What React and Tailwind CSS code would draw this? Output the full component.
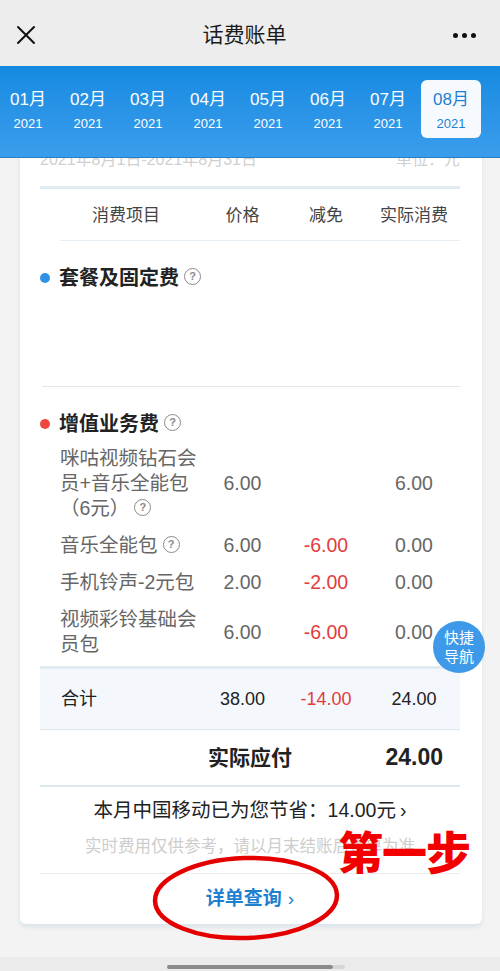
import React from "react";

const MONTHS = ["01", "02", "03", "04", "05", "06", "07", "08"];

const ITEMS = [
  { name: "咪咕视频钻石会员+音乐全能包（6元）", tip: true, price: "6.00", cut: "", actual: "6.00" },
  { name: "音乐全能包", tip: true, price: "6.00", cut: "-6.00", actual: "0.00" },
  { name: "手机铃声-2元包", tip: false, price: "2.00", cut: "-2.00", actual: "0.00" },
  { name: "视频彩铃基础会员包", tip: false, price: "6.00", cut: "-6.00", actual: "0.00" },
];

const Tip = () => (
  <span className="inline-flex items-center justify-center w-[17px] h-[17px] rounded-full border-[1.5px] border-[#8a8a8a] text-[11px] leading-none text-[#8a8a8a] font-bold align-middle ml-[5px] relative top-[-2px]">
    ?
  </span>
);

const Cell = ({ children, className }) => (
  <div className={"flex justify-center whitespace-nowrap " + (className || "")}>{children}</div>
);

export default function App() {
  return (
    <div className="relative w-[500px] h-[971px] overflow-hidden bg-[#f3f3f3] flex flex-col font-['Liberation_Sans','Noto_Sans_CJK_SC',sans-serif]">
      {/* top bar */}
      <div className="h-[66px] flex-shrink-0 bg-[#ededed] flex items-center justify-between px-[16px] pt-[4px]">
        <svg width="20" height="20" viewBox="0 0 20 20" className="ml-[0px]">
          <path d="M2 2 L18 18 M18 2 L2 18" stroke="#111" strokeWidth="2" strokeLinecap="round" />
        </svg>
        <div className="text-[21px] text-[#1b1b1b]">话费账单</div>
        <div className="flex gap-[4px] mr-[8px]">
          <span className="w-[5px] h-[5px] rounded-full bg-[#111]" />
          <span className="w-[5px] h-[5px] rounded-full bg-[#111]" />
          <span className="w-[5px] h-[5px] rounded-full bg-[#111]" />
        </div>
      </div>

      {/* month tabs */}
      <div className="h-[92px] flex-shrink-0 bg-gradient-to-b from-[#138ae1] to-[#3a9dec] border-b border-[#2a7fc4] z-10">
        <div className="flex pt-[14px] ml-[-2px]">
          {MONTHS.map((m) => {
            const active = m === "08";
            return (
              <div
                key={m}
                className={
                  "w-[60px] h-[58px] flex flex-col items-center rounded-[6px] " +
                  (active ? "bg-[#f6fafe] text-[#1f7fd0] ml-[3px]" : "text-white")
                }
              >
                <div className="text-[17px] leading-[24px] mt-[8px]">{m}月</div>
                <div className="text-[13px] leading-[18px] mt-[3px]">2021</div>
              </div>
            );
          })}
        </div>
      </div>

      {/* content */}
      <div className="flex-1 overflow-hidden">
        <div className="ml-[20px] w-[462px] mt-[-18px] bg-white rounded-b-[6px] shadow-[0_3px_4px_rgba(170,200,220,0.35)] pt-[8px] pl-[20px] pr-[22px]">
          <div className="h-[24px] flex justify-between items-center text-[16px] text-[#cfcfcf]">
            <span>2021年8月1日-2021年8月31日</span>
            <span>单位：元</span>
          </div>
          <div className="mt-[14px] h-[3px] bg-[#e1ebf2]" />

          {/* header row */}
          <div className="grid grid-cols-[172px_61px_106px_70px] h-[51px] items-center text-[17px] text-[#444] pt-[3px]">
            <Cell>消费项目</Cell>
            <Cell>价格</Cell>
            <Cell>减免</Cell>
            <Cell>实际消费</Cell>
          </div>
          <div className="ml-[20px] h-px bg-[#e7eef3]" />

          {/* section 1 */}
          <div className="pt-[23px] h-[145px]">
            <div className="flex items-center h-[28px]">
              <span className="w-[10px] h-[10px] rounded-full bg-[#2e93e6] mr-[9px]" />
              <span className="text-[20px] font-bold text-[#222]">套餐及固定费</span>
              <Tip />
            </div>
          </div>
          <div className="ml-[2px] h-px bg-[#e6e6e6]" />

          {/* section 2 */}
          <div className="pt-[23px] pb-[9px]">
            <div className="flex items-center h-[28px]">
              <span className="w-[10px] h-[10px] rounded-full bg-[#f0473d] mr-[9px]" />
              <span className="text-[20px] font-bold text-[#222]">增值业务费</span>
              <Tip />
            </div>
            <div className="mt-[8px] flex flex-col gap-[12px]">
              {ITEMS.map((it) => (
                <div key={it.name} className="grid grid-cols-[172px_61px_106px_70px] items-center text-[19.5px] leading-[25px] text-[#666]">
                  <div className="pl-[20px]">
                    <div className="w-[145px]">
                      {it.name}
                      {it.tip && <Tip />}
                    </div>
                  </div>
                  <Cell>{it.price}</Cell>
                  <Cell className="text-[#e23c3c]">{it.cut}</Cell>
                  <Cell>{it.actual}</Cell>
                </div>
              ))}
            </div>
          </div>
          <div className="h-[3px] bg-[#e1ebf2]" />

          {/* totals */}
          <div className="grid grid-cols-[172px_61px_106px_70px] h-[61px] items-center bg-[#f4f8fc] text-[18px] text-[#222] border-b border-[#dde8ef]">
            <div className="pl-[21px]">合计</div>
            <Cell>38.00</Cell>
            <Cell className="text-[#e23c3c]">-14.00</Cell>
            <Cell>24.00</Cell>
          </div>
          <div className="h-[55px] flex items-center font-bold text-[#222]">
            <span className="ml-[168px] text-[21px]">实际应付</span>
            <span className="ml-auto mr-[17px] text-[23px]">24.00</span>
          </div>
          <div className="h-[2px] bg-[#dde8ef]" />

          <div className="mt-[9px] h-[30px] flex items-center justify-center text-[19.5px] text-[#222]">
            本月中国移动已为您节省：14.00元 <span className="ml-[4px]">›</span>
          </div>
          <div className="mt-[8px] h-[24px] flex items-center justify-center text-[16.5px] text-[#cdcdcd]">
            实时费用仅供参考，请以月末结账后账单为准
          </div>
          <div className="mt-[15px] h-px bg-[#ececec]" />
          <div className="h-[50px] flex items-center justify-center text-[19px] font-bold text-[#1f7fd0]">
            详单查询 <span className="ml-[6px] font-normal">›</span>
          </div>
        </div>
      </div>

      {/* home indicator */}
      <div className="h-[14px] flex-shrink-0 bg-[#ebebeb] flex items-start pt-[8px] pl-[167px]">
        <span className="w-[166px] h-[4px] rounded-full bg-[#8a8a8a]" />
        <span className="w-[12px] h-[4px] rounded-r-full bg-[#d6d6d6]" />
      </div>

      {/* floating nav */}
      <div className="absolute left-[433px] top-[621px] w-[52px] h-[52px] rounded-full bg-[#3f99e9] flex flex-col items-center justify-center text-white text-[15px] leading-[19px]">
        <span>快捷</span>
        <span>导航</span>
      </div>

      {/* annotation */}
      <svg className="absolute left-0 top-0 pointer-events-none" width="500" height="971">
        <ellipse cx="246" cy="898" rx="91" ry="40" fill="none" stroke="#e50000" strokeWidth="4.5" transform="rotate(-2 246 898)" />
      </svg>
      <div className="absolute left-[338px] top-[826px] text-[45px] leading-[58px] font-black text-[#f20000] tracking-[-1px]">
        第一步
      </div>
    </div>
  );
}
